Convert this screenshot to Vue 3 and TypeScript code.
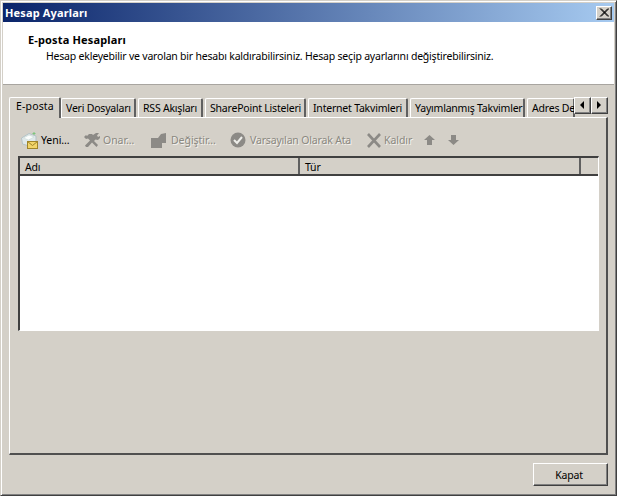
<script setup lang="ts">
interface TabItem { label: string; width: number }
const tabs: TabItem[] = [
  { label: 'Veri Dosyaları', width: 75 },
  { label: 'RSS Akışları', width: 65 },
  { label: 'SharePoint Listeleri', width: 101 },
  { label: 'Internet Takvimleri', width: 100 },
  { label: 'Yayımlanmış Takvimler', width: 115 },
  { label: 'Adres De', width: 48 },
]
</script>

<template>
  <div class="win">
    <div class="title">
      <span class="title-text">Hesap Ayarları</span>
      <span class="close">
        <svg width="10" height="9" viewBox="0 0 10 9"><path d="M1 0.5 L9 8.5 M2 0.5 L10 8.5 M9 0.5 L1 8.5 M10 0.5 L2 8.5" stroke="#000" stroke-width="1" fill="none" /></svg>
      </span>
    </div>
    <div class="head">
      <div class="h1">E-posta Hesapları</div>
      <div class="h2">Hesap ekleyebilir ve varolan bir hesabı kaldırabilirsiniz. Hesap seçip ayarlarını değiştirebilirsiniz.</div>
    </div>
    <div class="body">
      <div class="tabstrip">
        <div class="tab active">E-posta</div>
        <div v-for="t in tabs" :key="t.label" class="tab" :style="{ width: t.width + 'px' }">{{ t.label }}</div>
        <div class="scroller">
          <span class="sbtn"><svg width="5" height="9" viewBox="0 0 5 9"><path d="M4 0 L4 8 L0 4 Z" fill="#000" /></svg></span>
          <span class="sbtn"><svg width="5" height="9" viewBox="0 0 5 9"><path d="M0 0 L0 8 L4 4 Z" fill="#000" /></svg></span>
        </div>
      </div>
      <div class="panel">
        <div class="toolbar">
          <span class="tool new">
            <svg width="17" height="18" viewBox="0 0 17 18">
              <path d="M0.5 7 L8 2.5 L15 5 L15 11 L8 15 L1.5 13 Z" fill="#dfe8ea" stroke="#b4c2c6" />
              <path d="M2.5 7 L8 4 L13 6 L7.5 9 Z" fill="#fbfdfd" stroke="#c8d8d4" stroke-width="0.6" />
              <rect x="6.5" y="10.5" width="10" height="7" fill="#f2d56a" stroke="#a0852a" />
              <path d="M6.5 10.5 L11.5 14.5 L16.5 10.5" fill="none" stroke="#a0852a" />
              <path d="M13 1 L13 4 M11.5 2.5 L14.5 2.5" stroke="#7cc47c" stroke-width="1" />
            </svg>
            <span>Yeni...</span>
          </span>
          <span class="tool off onar">
            <svg width="16" height="14" viewBox="0 0 16 14">
              <path d="M0 4 L2 2 L3 3 L5 1 L8 1 L9 2 L12 0 L15 0 L13 2.5 L14 4 L16 3 L16 5 L14 7 L11.5 6.5 L10 8 L14 12 L12.5 14 L8 9.5 L4 14 L2 14 L1 12.5 L6 7.5 L4 5.5 L2 6 Z" fill="#8c8a86" />
            </svg>
            <span>Onar...</span>
          </span>
          <span class="tool off degis">
            <svg width="15" height="15" viewBox="0 0 15 15">
              <path d="M0 5 L7 5 L10 1 L15 0 L15 10 L11 10 L11 15 L0 15 Z" fill="#8c8a86" />
            </svg>
            <span>Değiştir...</span>
          </span>
          <span class="tool off vars">
            <svg width="16" height="16" viewBox="0 0 16 16">
              <circle cx="8" cy="8" r="7.5" fill="#8c8a86" />
              <path d="M4 8 L7 11 L12 5" fill="none" stroke="#eeeeea" stroke-width="2" />
            </svg>
            <span>Varsayılan Olarak Ata</span>
          </span>
          <span class="tool off kald">
            <svg width="16" height="15" viewBox="0 0 15 15">
              <path d="M1.5 1 L13.5 14 M13.5 1 L1.5 14" stroke="#8c8a86" stroke-width="2.6" fill="none" />
            </svg>
            <span>Kaldır</span>
          </span>
          <span class="arrow">
            <svg width="11" height="10" viewBox="0 0 11 10"><path d="M5.5 0 L11 5 L8 5 L8 10 L3 10 L3 5 L0 5 Z" fill="#8c8a86" /></svg>
          </span>
          <span class="arrow">
            <svg width="11" height="10" viewBox="0 0 11 10"><path d="M5.5 10 L11 5 L8 5 L8 0 L3 0 L3 5 L0 5 Z" fill="#8c8a86" /></svg>
          </span>
        </div>
        <div class="list">
          <div class="lhead">
            <div class="col c1">Adı</div>
            <div class="col c2">Tür</div>
            <div class="col c3"></div>
          </div>
          <div class="lbody"></div>
        </div>
      </div>
      <div class="foot">
        <button class="btn" type="button">Kapat</button>
      </div>
    </div>
  </div>
</template>

<style>
html, body { margin: 0; background: #d4d0c8; }
</style>

<style scoped>
.win {
  box-sizing: border-box;
  width: 617px;
  height: 496px;
  background: #d4d0c8;
  border-top: 1px solid #d4d0c8;
  border-left: 1px solid #d4d0c8;
  border-right: 1px solid #404040;
  border-bottom: 1px solid #404040;
  box-shadow: inset 1px 1px 0 #fff, inset -1px -1px 0 #808080;
  padding: 2px 2px 1px 2px;
  display: flex;
  flex-direction: column;
  font-family: "Noto Sans", sans-serif;
  font-size: 10.5px;
  letter-spacing: -0.21px;
  color: #000;
  overflow: hidden;
}
.title {
  flex: none;
  height: 19px;
  background: linear-gradient(90deg, #0a246a, #a6caf0);
  display: flex;
  align-items: center;
  justify-content: space-between;
  padding: 0 2px;
}
.title-text { color: #fff; font-weight: 700; font-size: 11px; letter-spacing: 0.15px; }
.close {
  box-sizing: border-box;
  width: 16px;
  height: 14px;
  background: #d4d0c8;
  border: 1px solid;
  border-color: #fff #404040 #404040 #fff;
  box-shadow: inset -1px -1px 0 #808080;
  display: flex;
  align-items: center;
  justify-content: center;
}
.head {
  flex: none;
  box-sizing: border-box;
  height: 63px;
  background: #fff;
  border-bottom: 1px solid #a8a5a0;
  padding: 10px 0 0 25px;
}
.h1 { font-weight: 700; font-size: 11px; letter-spacing: 0.15px; line-height: 16px; }
.h2 { padding-left: 18px; line-height: 16px; }
.body { flex: 1; display: flex; flex-direction: column; padding: 0 6px; min-height: 0; }
.tabstrip {
  position: relative;
  flex: none;
  height: 33px;
  box-sizing: border-box;
  display: flex;
  align-items: flex-end;
  margin-bottom: -1px;
  z-index: 1;
}
.tab {
  flex: none;
  box-sizing: border-box;
  height: 19px;
  line-height: 18px;
  padding-left: 4px;
  margin-left: 2px;
  margin-bottom: 1px;
  background: #d4d0c8;
  border-top: 1px solid #fff;
  border-left: 1px solid #fff;
  border-right: 2px solid #606060;
  border-radius: 2px 2px 0 0;
  white-space: nowrap;
}
.tab.active {
  width: 52px;
  height: 21px;
  margin-left: 0;
  margin-right: -2px;
  margin-bottom: 0;
  padding-left: 6px;
  letter-spacing: 0.15px;
  line-height: 17px;
}
.tab:last-of-type { border-right: none; }
.scroller {
  position: absolute;
  right: 0;
  top: 12px;
  display: flex;
  background: #d4d0c8;
}
.sbtn {
  box-sizing: border-box;
  width: 17px;
  height: 17px;
  background: #d4d0c8;
  border: 1px solid;
  border-color: #fff #404040 #404040 #fff;
  box-shadow: inset -1px -1px 0 #808080;
  display: flex;
  align-items: center;
  justify-content: center;
}
.panel {
  flex: none;
  box-sizing: border-box;
  height: 338px;
  border-top: 1px solid #fff;
  border-left: 1px solid #fff;
  border-right: 2px solid #505050;
  border-bottom: 2px solid #505050;
  padding: 8px 8px 0 8px;
}
.toolbar { height: 28px; margin-bottom: 2px; padding-left: 3px; display: flex; align-items: center; letter-spacing: -0.05px; }
.tool { flex: none; display: flex; align-items: center; white-space: nowrap; }
.new { width: 63px; gap: 3px; }
.onar { width: 67px; gap: 3px; }
.degis { width: 79px; gap: 5px; }
.vars { width: 136px; gap: 4px; letter-spacing: -0.17px; }
.kald { width: 58px; gap: 2px; }
.off { color: #8a8880; text-shadow: 1px 1px 0 #f4f2ee; }
.arrow { flex: none; display: flex; width: 24px; }
.list {
  box-sizing: border-box;
  height: 175px;
  width: 581px;
  display: flex;
  flex-direction: column;
  border-top: 2px solid #404040;
  border-left: 2px solid #404040;
  border-right: 1px solid #fff;
  border-bottom: 1px solid #fff;
}
.lhead { flex: none; height: 16px; display: flex; background: #d4d0c8; border-bottom: 2px solid #404040; box-sizing: content-box; }
.col { box-sizing: border-box; padding-left: 5px; line-height: 18px; border-right: 2px solid #606060; }
.c1 { width: 280px; }
.c2 { width: 281px; }
.c3 { flex: 1; border-right: none; }
.lbody { flex: 1; background: #fff; }
.foot { flex: 1; display: flex; justify-content: flex-end; align-items: flex-start; padding-top: 8px; }
.btn {
  box-sizing: border-box;
  width: 75px;
  height: 23px;
  padding: 0 3px 0 0;
  background: #d4d0c8;
  border: 1px solid;
  border-color: #fff #404040 #404040 #fff;
  box-shadow: inset -1px -1px 0 #808080;
  font: inherit;
  letter-spacing: inherit;
  color: #000;
}
</style>
